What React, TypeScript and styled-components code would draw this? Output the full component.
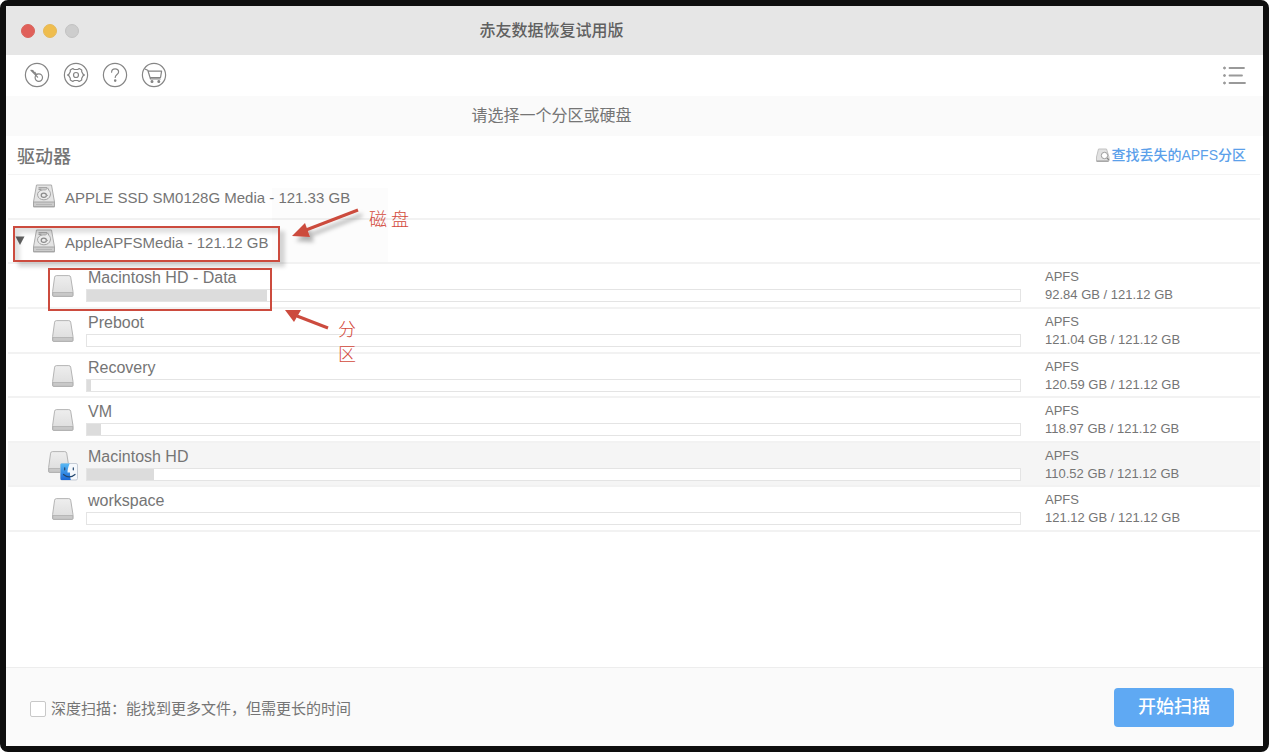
import React from "react";
import styled, { createGlobalStyle } from "styled-components";

const GlobalStyle = createGlobalStyle`
  *, *::before, *::after { box-sizing: border-box; }
  body {
    margin: 0;
    background: #fff;
    color: #757575;
    font-family: "Liberation Sans", "Noto Sans CJK SC", sans-serif;
  }
  button { font: inherit; color: inherit; background: none; border: 0; padding: 0; }
  h1, h2, p, ul { margin: 0; padding: 0; font-weight: 400; }
  ul { list-style: none; }
`;

const Window = styled.div`
  display: flex;
  flex-direction: column;
  min-height: 100vh;
  border: 6px solid #0e0e0e;
  border-radius: 8px;
  background: #fff;
`;

const TitleBar = styled.header`
  display: flex;
  align-items: center;
  height: 49px;
  padding: 0 181px 0 15px;
  background: #e6e6e6;
`;

const Lights = styled.div`
  display: flex;
  gap: 8px;
  width: 0;
`;

const Light = styled.button<{ $color: string; $ring: string }>`
  flex: none;
  width: 14px;
  height: 14px;
  border: 1px solid ${(p) => p.$ring};
  border-radius: 50%;
  background: ${(p) => p.$color};
`;

const Title = styled.h1`
  flex: 1;
  font-size: 16px;
  font-weight: 500;
  line-height: 24px;
  text-align: center;
  color: #606060;
`;

const Toolbar = styled.nav`
  display: flex;
  align-items: center;
  gap: 15px;
  height: 41px;
  padding: 0 17px 2px 19px;
`;

const ToolButton = styled.button<{ $end?: boolean }>`
  display: flex;
  width: 24px;
  height: 24px;
  margin-left: ${(p) => (p.$end ? "auto" : "0")};
  color: ${(p) => (p.$end ? "#999" : "#858585")};
  svg { display: block; overflow: visible; }
`;

const Hint = styled.p`
  height: 40px;
  padding-right: 166px;
  background: #fafafa;
  font-size: 16px;
  line-height: 40px;
  text-align: center;
`;

const SectionHead = styled.div`
  display: flex;
  align-items: center;
  justify-content: space-between;
  height: 38px;
  padding: 0 17px 0 11px;
`;

const SectionTitle = styled.h2`
  font-size: 18px;
  font-weight: 500;
  line-height: 24px;
  padding-top: 4px;
`;

const FindLink = styled.a`
  display: flex;
  align-items: center;
  gap: 1px;
  font-size: 14px;
  font-weight: 500;
  line-height: 20px;
  color: #5ba0ea;
  text-decoration: none;
`;

const Drives = styled.main`
  position: relative;
  flex: 1;
`;

const DriveList = styled.ul`
  display: grid;
  grid-template-rows: repeat(8, 1fr);
  height: 358px;
  margin: 0 3px 0 2px;
  border-top: 1px solid #f4f4f4;
`;

const Row = styled.li<{ $active?: boolean }>`
  display: flex;
  border-bottom: 2px solid #f2f2f2;
  background: ${(p) => (p.$active ? "#f5f5f5" : "#fff")};
`;

const DiskRow = styled(Row)`
  align-items: center;
  padding-left: 6px;
`;

const Toggle = styled.button`
  width: 12px;
  height: 20px;
  svg { display: block; }
`;

const ToggleSpace = styled.span`
  width: 12px;
`;

const DiskIconBox = styled.span`
  display: flex;
  width: 24px;
  margin: 0 9px 0 6px;
`;

const DiskName = styled.span`
  padding-top: 4px;
  font-size: 15px;
  line-height: 20px;
`;

const IconCell = styled.div<{ $boot?: boolean }>`
  width: 78px;
  padding: ${(p) => (p.$boot ? "7px 0 0 40px" : "10px 0 0 44px")};
  svg { display: block; }
`;

const Volume = styled.div`
  flex: 1;
  padding-top: 4px;
`;

const VolumeName = styled.div`
  height: 21px;
  padding-left: 2px;
  font-size: 16px;
  line-height: 20px;
`;

const Bar = styled.div`
  height: 13px;
  border: 1px solid #e4e4e4;
  background: #fff;
`;

const Fill = styled.div`
  height: 100%;
  background: #dcdcdc;
`;

const Info = styled.div`
  width: 215px;
  margin-left: 24px;
  padding-top: 4px;
  font-size: 13px;
  line-height: 18px;
`;

const Footer = styled.footer`
  display: flex;
  align-items: center;
  justify-content: space-between;
  height: 79px;
  padding: 0 29px 0 24px;
  border-top: 1px solid #ededed;
  background: #fafafa;
`;

const DeepScan = styled.label`
  display: flex;
  align-items: center;
  gap: 5px;
  padding-top: 4px;
  font-size: 15px;
  line-height: 24px;
`;

const Check = styled.input`
  appearance: none;
  width: 16px;
  height: 16px;
  margin: 0;
  border: 1px solid #c8c8c8;
  border-radius: 2px;
  background: #fff;
  &:checked { background: #5fa9f3; }
`;

const ScanButton = styled.button`
  width: 120px;
  height: 39px;
  border-radius: 4px;
  background: #5fa9f3;
  color: #fff;
  font-size: 18px;
  font-weight: 500;
  line-height: 38px;
`;

const Callout = styled.div<{ $x: number; $y: number; $w: number; $h: number; $shadow?: boolean }>`
  position: absolute;
  left: ${(p) => p.$x}px;
  top: ${(p) => p.$y}px;
  width: ${(p) => p.$w}px;
  height: ${(p) => p.$h}px;
  border: 2px solid #cc4b3e;
  box-shadow: ${(p) =>
    p.$shadow
      ? "5px 5px 4px rgba(0,0,0,.16), inset 5px 5px 4px rgba(0,0,0,.12)"
      : "none"};
  pointer-events: none;
`;

const Arrow = styled.svg<{ $x: number; $y: number }>`
  position: absolute;
  left: ${(p) => p.$x}px;
  top: ${(p) => p.$y}px;
  overflow: visible;
  pointer-events: none;
`;

const Tag = styled.div<{ $x: number; $y: number; $vertical?: boolean }>`
  position: absolute;
  left: ${(p) => p.$x}px;
  top: ${(p) => p.$y}px;
  display: flex;
  flex-direction: ${(p) => (p.$vertical ? "column" : "row")};
  gap: ${(p) => (p.$vertical ? "0" : "4px")};
  color: #d3493b;
  font-size: 18px;
  font-weight: 300;
  font-family: "Noto Sans CJK SC", sans-serif;
  line-height: 25px;
`;

const Wash = styled.div`
  position: absolute;
  left: 266px;
  top: 14px;
  width: 116px;
  height: 74px;
  background: rgba(0, 0, 0, 0.01);
  pointer-events: none;
`;

const DiskIcon = () => (
  <svg width="24" height="24" viewBox="0 0 24 24" fill="none">
    <path d="M4.500 1h15l3 17v5h-21v-5z" fill="#e4e4e4" stroke="#adadad" />
    <path d="M1.500 18h21v4.500h-21z" fill="#cbcbcb" stroke="#a6a6a6" />
    <path d="M6.500 3.800h8.500M6.500 5.300h3" stroke="#8c8c8c" />
    <path d="M17 6.500c1.200 1.200 1.700 2.700 1.400 4.500-.5 3-3.200 4.800-6.500 4.800s-5.800-1.800-6.300-4.500c-.4-2.500 1.500-4.600 4.400-5.300 1.200-.3 2.600-.2 3.600 0l2-2.200z" fill="#ececec" stroke="#a2a2a2" />
    <ellipse cx="11.800" cy="11.300" rx="2.600" ry="2.100" stroke="#8a8a8a" strokeWidth="1.200" />
    <path d="M14 11.400h2" stroke="#a0a0a0" />
    <path d="M4 20.500h16" stroke="#b6b6b6" />
  </svg>
);

const VolumeIcon = ({ boot }: { boot?: boolean }) => (
  <svg width={boot ? 30 : 22} height={boot ? 32 : 24} viewBox={boot ? "0 0 30 32" : "0 0 22 24"} fill="none">
    <defs>
      <linearGradient id="lid" x1="0" y1="0" x2="0" y2="1">
        <stop offset="0" stopColor="#eeeeee" />
        <stop offset="1" stopColor="#dcdcdc" />
      </linearGradient>
      <linearGradient id="face" x1="0" y1="0" x2="0" y2="1">
        <stop offset="0" stopColor="#58b9f4" />
        <stop offset="1" stopColor="#1c68d6" />
      </linearGradient>
    </defs>
    <path d="M4.400 1.600h12.400q1.600 0 1.900 1.600l2.300 14.400v3.800q0 1-1 1H1.600q-1 0-1-1v-3.800L2.600 3.200q.3-1.600 1.800-1.600z" fill="url(#lid)" stroke="#b4b4b4" />
    <path d="M.8 18.500h20v2.900q0 .9-1 .9H1.800q-1 0-1-.9z" fill="#c8c8c8" stroke="#ababab" strokeWidth=".7" />
    {boot && (
      <g>
        <rect x="12.500" y="13.500" width="17" height="16.500" rx="1.500" fill="#f5f8fc" stroke="#c5ccd6" />
        <path d="M13.500 13.500h8.200c-1.600 3.500-2.200 6.500-2.200 9h2.500c0 3 .2 5 .8 7.500h-9.300q-1 0-1-1V14.500q0-1 1-1z" fill="url(#face)" />
        <path d="M16.700 17.800v2M25.300 17.800v2M15.500 24.500c3.500 3 8 3 11.500 0" stroke="#24476f" strokeWidth="1.200" strokeLinecap="round" />
      </g>
    )}
  </svg>
);

const Ring = ({ children }: { children: React.ReactNode }) => (
  <svg width="24" height="24" viewBox="0 0 24 24" fill="none" stroke="currentColor" strokeWidth="1.200" strokeLinecap="round" strokeLinejoin="round">
    <circle cx="12" cy="12" r="11.600" strokeWidth="1.200" />
    {children}
  </svg>
);

const disks = [
  { name: "APPLE SSD SM0128G Media - 121.33 GB", open: false },
  { name: "AppleAPFSMedia - 121.12 GB", open: true },
];

const volumes = [
  { name: "Macintosh HD - Data", used: 19.3, size: "92.84 GB / 121.12 GB" },
  { name: "Preboot", used: 0, size: "121.04 GB / 121.12 GB" },
  { name: "Recovery", used: 0.4, size: "120.59 GB / 121.12 GB" },
  { name: "VM", used: 1.5, size: "118.97 GB / 121.12 GB" },
  { name: "Macintosh HD", used: 7.2, size: "110.52 GB / 121.12 GB", boot: true },
  { name: "workspace", used: 0, size: "121.12 GB / 121.12 GB" },
];

export default function App() {
  return (
    <>
      <GlobalStyle />
      <Window>
        <TitleBar>
          <Lights>
            <Light aria-label="关闭" $color="#e0605a" $ring="#d9645c" />
            <Light aria-label="最小化" $color="#efbd4e" $ring="#e5b95a" />
            <Light aria-label="缩放" $color="#cdcdcd" $ring="#c2c2c2" />
          </Lights>
          <Title>赤友数据恢复试用版</Title>
        </TitleBar>

        <Toolbar>
          <ToolButton aria-label="激活">
            <Ring>
              <circle cx="13.800" cy="14.600" r="3.700" />
              <path d="M6 7.300 12.600 14.200M6 7.300l2 .4.600 1.400 1.500.3.400 1.500 1.500.2" />
            </Ring>
          </ToolButton>
          <ToolButton aria-label="设置">
            <Ring>
              <path d="M8.800 5.500 10.300 6.500h3.400l1.500-1 2.500 1.500v1.800l1.500 2.600 1.300.6-1.300.6-1.500 2.600v1.800l-2.500 1.500-1.500-1h-3.400l-1.500 1L6.300 17v-1.800l-1.500-2.600-1.300-.6 1.300-.6 1.500-2.600V7z" />
              <circle cx="12" cy="12" r="2.500" />
            </Ring>
          </ToolButton>
          <ToolButton aria-label="帮助">
            <Ring>
              <path d="M8.600 9.200c0-2 1.500-3.300 3.500-3.300s3.500 1.300 3.500 3.100c0 2.400-3.400 2.600-3.400 5.400" />
              <circle cx="12.200" cy="17.600" r=".7" fill="currentColor" />
            </Ring>
          </ToolButton>
          <ToolButton aria-label="购买">
            <Ring>
              <path d="M3.400 6.200 5.800 7.200l2.700 8.800h9.700M6.200 8.200h13.400l-1 6q-.1.500-.6.500H8.200" />
              <circle cx="10" cy="18.400" r=".9" fill="currentColor" />
              <circle cx="16.800" cy="18.400" r=".9" fill="currentColor" />
            </Ring>
          </ToolButton>
          <ToolButton aria-label="列表" $end>
            <svg width="24" height="24" viewBox="0 0 24 24" stroke="currentColor" fill="currentColor">
              <path d="M7.500 5H22M7.500 12.500H20M7.500 20H23" strokeWidth="1.800" strokeLinecap="round" />
              <circle cx="2.500" cy="5" r="1" />
              <circle cx="2.500" cy="12.500" r="1" />
              <circle cx="2.500" cy="20" r="1" />
            </svg>
          </ToolButton>
        </Toolbar>

        <Hint>请选择一个分区或硬盘</Hint>

        <SectionHead>
          <SectionTitle>驱动器</SectionTitle>
          <FindLink href="#find">
            <svg width="14" height="14" viewBox="0 0 14 14" fill="none">
              <path d="M2.500 1h8l2.500 8v4H.5V9z" fill="#e2e2e2" stroke="#c2c2c2" />
              <path d="M.5 13.200h12" stroke="#8f8f8f" />
              <circle cx="8.500" cy="7.500" r="3.200" fill="#fff" stroke="#9c9c9c" />
              <path d="m11 10 2 2" stroke="#888" strokeWidth="1.300" />
            </svg>
            查找丢失的APFS分区
          </FindLink>
        </SectionHead>

        <Drives>
          <DriveList>
            {disks.map((d) => (
              <DiskRow key={d.name}>
                {d.open ? (
                  <Toggle aria-label="收起" aria-expanded>
                    <svg width="12" height="14" viewBox="0 0 12 14">
                      <path d="M1.500 2.500h9L6 11z" fill="#606060" />
                    </svg>
                  </Toggle>
                ) : (
                  <ToggleSpace />
                )}
                <DiskIconBox>
                  <DiskIcon />
                </DiskIconBox>
                <DiskName>{d.name}</DiskName>
              </DiskRow>
            ))}
            {volumes.map((v) => (
              <Row key={v.name} $active={v.boot}>
                <IconCell $boot={v.boot}>
                  <VolumeIcon boot={v.boot} />
                </IconCell>
                <Volume>
                  <VolumeName>{v.name}</VolumeName>
                  <Bar role="progressbar" aria-label={v.name} aria-valuenow={v.used}>
                    <Fill style={{ width: `${v.used}%` }} />
                  </Bar>
                </Volume>
                <Info>
                  <div>APFS</div>
                  <div>{v.size}</div>
                </Info>
              </Row>
            ))}
          </DriveList>

          <Wash />
          <Callout $x={7} $y={52} $w={267} $h={36} $shadow />
          <Callout $x={42} $y={94} $w={224} $h={43} />
          <Arrow $x={286} $y={36} width="66" height="30" viewBox="0 0 66 30">
            <defs>
              <filter id="soft" x="-20%" y="-30%" width="150%" height="190%">
                <feDropShadow dx="4" dy="5" stdDeviation="2" floodColor="#000" floodOpacity=".3" />
              </filter>
            </defs>
            <g filter="url(#soft)">
              <path d="M66 0 14 20" stroke="#cc4b3e" strokeWidth="3" />
              <path d="M0 26 13 13l5 14z" fill="#cc4b3e" />
            </g>
          </Arrow>
          <Arrow $x={279} $y={136} width="44" height="20" viewBox="0 0 44 20">
            <path d="M43 18 12 6" stroke="#cc4b3e" strokeWidth="3" />
            <path d="M0 0h16L9 12z" fill="#cc4b3e" />
          </Arrow>
          <Tag $x={363} $y={32}>
            <span>磁</span>
            <span>盘</span>
          </Tag>
          <Tag $x={332} $y={142} $vertical>
            <span>分</span>
            <span>区</span>
          </Tag>
        </Drives>

        <Footer>
          <DeepScan>
            <Check type="checkbox" />
            深度扫描：能找到更多文件，但需更长的时间
          </DeepScan>
          <ScanButton>开始扫描</ScanButton>
        </Footer>
      </Window>
    </>
  );
}
